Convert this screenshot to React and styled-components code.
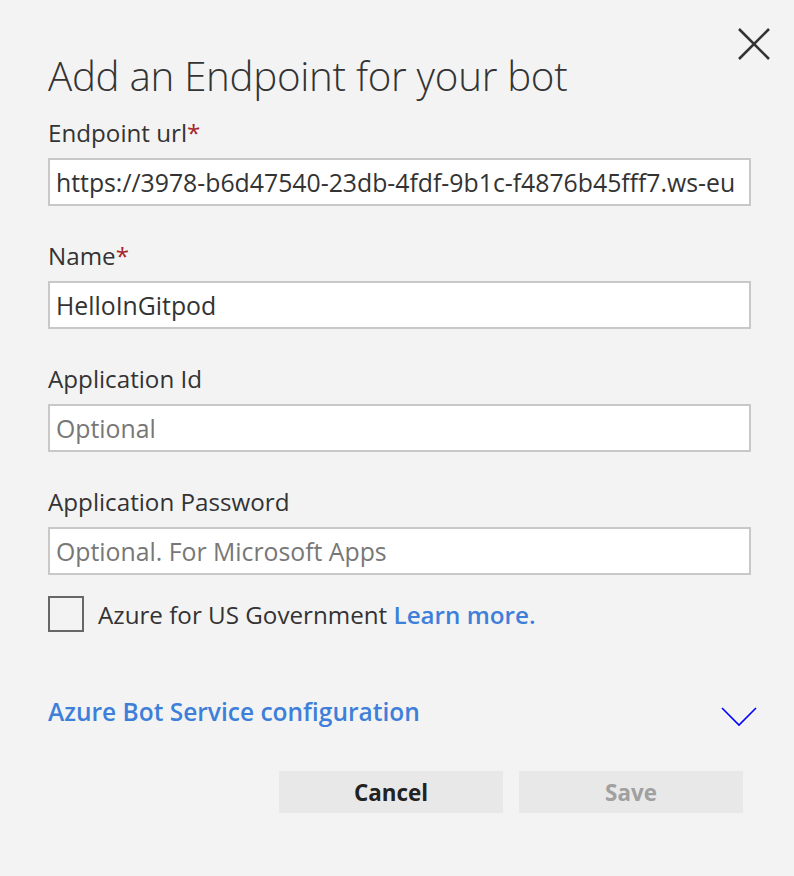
import React from "react";
import styled, { createGlobalStyle } from "styled-components";

const GlobalStyle = createGlobalStyle`
  html, body {
    margin: 0;
    padding: 0;
    background: #f3f3f3;
  }
  body {
    font-family: "Open Sans", "Noto Sans", sans-serif;
    color: #333333;
  }
`;

const Dialog = styled.div`
  box-sizing: border-box;
  width: 794px;
  min-height: 876px;
  padding: 28px 43px 40px 48px;
  background: #f3f3f3;
`;

const Header = styled.div`
  display: flex;
  justify-content: space-between;
  align-items: flex-start;
  margin-right: -19px;
`;

const Title = styled.h1`
  margin: 22px 0 0;
  font-size: 40.3px;
  font-weight: 300;
  line-height: 52px;
  color: #333333;
  letter-spacing: -0.3px;
`;

const CloseButton = styled.button`
  width: 32px;
  height: 32px;
  padding: 0;
  border: 0;
  background: transparent;
  display: flex;
`;

const Field = styled.div`
  display: flex;
  flex-direction: column;
  margin-top: ${(p) => p.$top ?? 34}px;
`;

const Label = styled.label`
  font-size: 24.2px;
  line-height: 32px;
  margin-bottom: 9px;
  color: #333333;
`;

const Required = styled.span`
  color: #a4262c;
`;

const Input = styled.input`
  box-sizing: border-box;
  width: 100%;
  height: 48px;
  padding: 0 6px;
  border: 2px solid #c8c8c8;
  background: #ffffff;
  font-family: "Open Sans", "Noto Sans", sans-serif;
  font-size: 24.8px;
  color: #333333;
  outline: none;

  &::placeholder {
    color: #777777;
  }
`;

const CheckRow = styled.label`
  display: flex;
  align-items: center;
  gap: 14px;
  margin-top: 21px;
  font-size: 24.2px;
  color: #333333;
`;

const CheckBox = styled.span`
  box-sizing: border-box;
  width: 36px;
  height: 36px;
  border: 2px solid #666666;
  background: transparent;
  flex: none;
`;

const Link = styled.a`
  color: #3d7fd9;
  font-weight: 600;
  font-size: 24.2px;
  text-decoration: none;
`;

const Collapse = styled.div`
  display: flex;
  align-items: center;
  justify-content: space-between;
  margin-top: 64px;
  margin-right: -6px;
`;

const CollapseTitle = styled.span`
  font-size: 24.5px;
  line-height: 32px;
  font-weight: 600;
  color: #3d7fd9;
`;

const Chevron = styled.svg`
  margin-top: 9px;
`;

const Buttons = styled.div`
  display: flex;
  justify-content: flex-end;
  gap: 16px;
  margin-top: 43px;
  margin-right: 8px;
`;

const Button = styled.button`
  width: 224px;
  height: 42px;
  border: 0;
  background: #e8e8e8;
  font-family: "Open Sans", "Noto Sans", sans-serif;
  font-size: 22.4px;
  font-weight: 700;
  color: ${(p) => (p.disabled ? "#a0a0a0" : "#222222")};
`;

export default function App() {
  return (
    <>
      <GlobalStyle />
      <Dialog>
        <Header>
          <Title>Add an Endpoint for your bot</Title>
          <CloseButton aria-label="Close">
            <svg width="32" height="32" viewBox="0 0 32 32">
              <path
                d="M1 1 L31 31 M31 1 L1 31"
                stroke="#333333"
                strokeWidth="2.6"
                fill="none"
              />
            </svg>
          </CloseButton>
        </Header>

        <Field $top={15}>
          <Label>
            Endpoint url<Required>*</Required>
          </Label>
          <Input
            readOnly
            value="https://3978-b6d47540-23db-4fdf-9b1c-f4876b45fff7.ws-eu"
          />
        </Field>

        <Field>
          <Label>
            Name<Required>*</Required>
          </Label>
          <Input readOnly value="HelloInGitpod" />
        </Field>

        <Field>
          <Label>Application Id</Label>
          <Input placeholder="Optional" />
        </Field>

        <Field>
          <Label>Application Password</Label>
          <Input placeholder="Optional. For Microsoft Apps" />
        </Field>

        <CheckRow>
          <CheckBox />
          <span>
            Azure for US Government <Link href="#">Learn more.</Link>
          </span>
        </CheckRow>

        <Collapse>
          <CollapseTitle>Azure Bot Service configuration</CollapseTitle>
          <Chevron width="36" height="20" viewBox="0 0 36 20">
            <polyline
              points="1,1 18,18 35,1"
              stroke="#0000ff"
              strokeWidth="1.6"
              fill="none"
            />
          </Chevron>
        </Collapse>

        <Buttons>
          <Button>Cancel</Button>
          <Button disabled>Save</Button>
        </Buttons>
      </Dialog>
    </>
  );
}
